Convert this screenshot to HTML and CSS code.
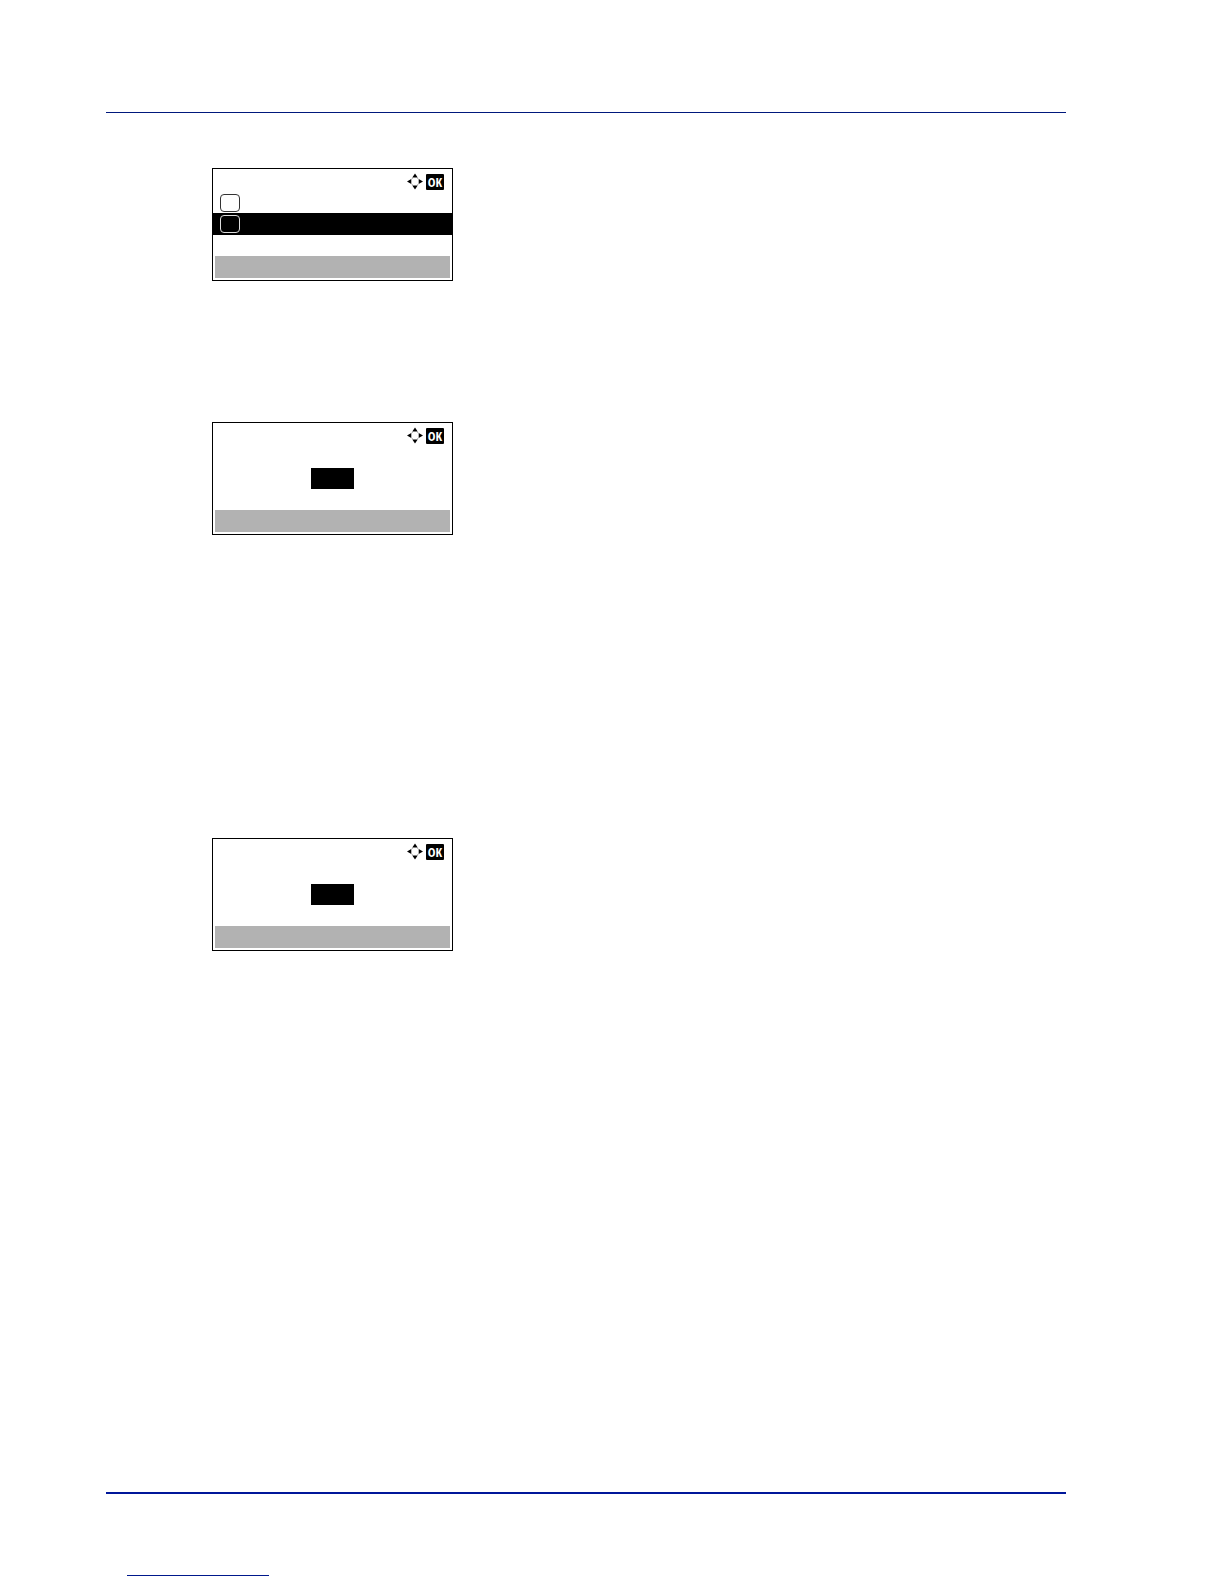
FILE: index.html
```html
<!DOCTYPE html>
<html lang="en">
<head>
  <meta charset="UTF-8">
  <meta name="viewport" content="width=device-width, initial-scale=1.0">
  <title>Operation Panel</title>
  <link rel="stylesheet" href="styles.css">
</head>
<body>
  <!-- arrow keys icon, shared by all the screens -->
  <svg class="defs" width="0" height="0" aria-hidden="true">
    <symbol id="arrows" viewBox="0 0 16 17">
      <path d="M8 0.5L10.7 4.5H5.3zM8 16.5L10.7 12.5H5.3zM0 8.5L4.3 6V11zM16 8.5L11.7 6V11z" fill="#000"/>
      <path d="M4.5 6L6 4.7M10 4.7L11.5 6M4.5 11L6 12.3M10 12.3L11.5 11" fill="none" stroke="#999" stroke-width="1"/>
    </symbol>
  </svg>

  <div class="page">
    <header class="page-header"></header>

    <main class="content">
      <section class="screen menu-screen">
        <div class="screen-top">
          <svg class="arrows"><use href="#arrows"/></svg>
          <button class="ok" type="button">OK</button>
        </div>
        <div class="screen-body">
          <div class="row"><span class="key"></span></div>
          <div class="row selected"><span class="key"></span></div>
        </div>
        <div class="screen-bottom"></div>
      </section>

      <section class="screen size-screen">
        <div class="screen-top">
          <svg class="arrows"><use href="#arrows"/></svg>
          <button class="ok" type="button">OK</button>
        </div>
        <div class="screen-body entry">
          <div class="value"></div>
        </div>
        <div class="screen-bottom"></div>
      </section>

      <section class="screen">
        <div class="screen-top">
          <svg class="arrows"><use href="#arrows"/></svg>
          <button class="ok" type="button">OK</button>
        </div>
        <div class="screen-body entry">
          <div class="value"></div>
        </div>
        <div class="screen-bottom"></div>
      </section>
    </main>

    <footer class="page-footer">
      <div class="footer-line"></div>
    </footer>
  </div>
</body>
</html>
```
FILE: styles.css
```css
* {
  box-sizing: border-box;
}
body {
  margin: 0;
  background: #fff;
  color: #000;
  font-family: "Liberation Sans", Arial, sans-serif;
}
.defs {
  display: block;
}
.page {
  display: flex;
  flex-direction: column;
  min-height: 100vh;
  padding: 112px 158px 8px 106px;
}
.page-header {
  border-top: 1px solid #00187c;
}
.content {
  flex: 1;
  padding: 55px 0 0 106px;
}

/* LCD screens */
.screen {
  display: flex;
  flex-direction: column;
  width: 241px;
  border: 1px solid #000;
}
.menu-screen {
  margin-bottom: 141px;
}
.size-screen {
  margin-bottom: 303px;
}
.screen-top {
  display: flex;
  justify-content: flex-end;
  align-items: center;
  gap: 3px;
  height: 23px;
  padding: 2px 8px 0 0;
}
.arrows {
  width: 16px;
  height: 17px;
}
.ok {
  width: 18px;
  height: 16px;
  padding: 0;
  border: none;
  border-radius: 1px;
  background: #000;
  color: #fff;
  font-family: "Liberation Sans Narrow", "Open Sans Condensed", "DejaVu Sans Condensed", sans-serif;
  font-size: 13px;
  font-weight: bold;
  line-height: 16px;
  text-align: center;
}
.screen-body {
  height: 64px;
}
.row {
  height: 21px;
  padding: 2px 7px;
}
.row.selected {
  height: 22px;
  background: #000;
}
.key {
  display: block;
  width: 20px;
  height: 18px;
  border: 1px solid #333;
  border-radius: 4px;
}
.selected .key {
  border-color: #ddd;
}
.entry {
  display: flex;
  justify-content: center;
  padding-top: 22px;
}
.value {
  width: 43px;
  height: 21px;
  background: #000;
}
.screen-bottom {
  height: 22px;
  margin: 0 2px 2px;
  background: #b2b2b2;
}

.page-footer {
  border-top: 2px solid #00179a;
  padding: 81px 0 0 21px;
}
.footer-line {
  width: 142px;
  border-top: 1px solid #00188c;
}
```
